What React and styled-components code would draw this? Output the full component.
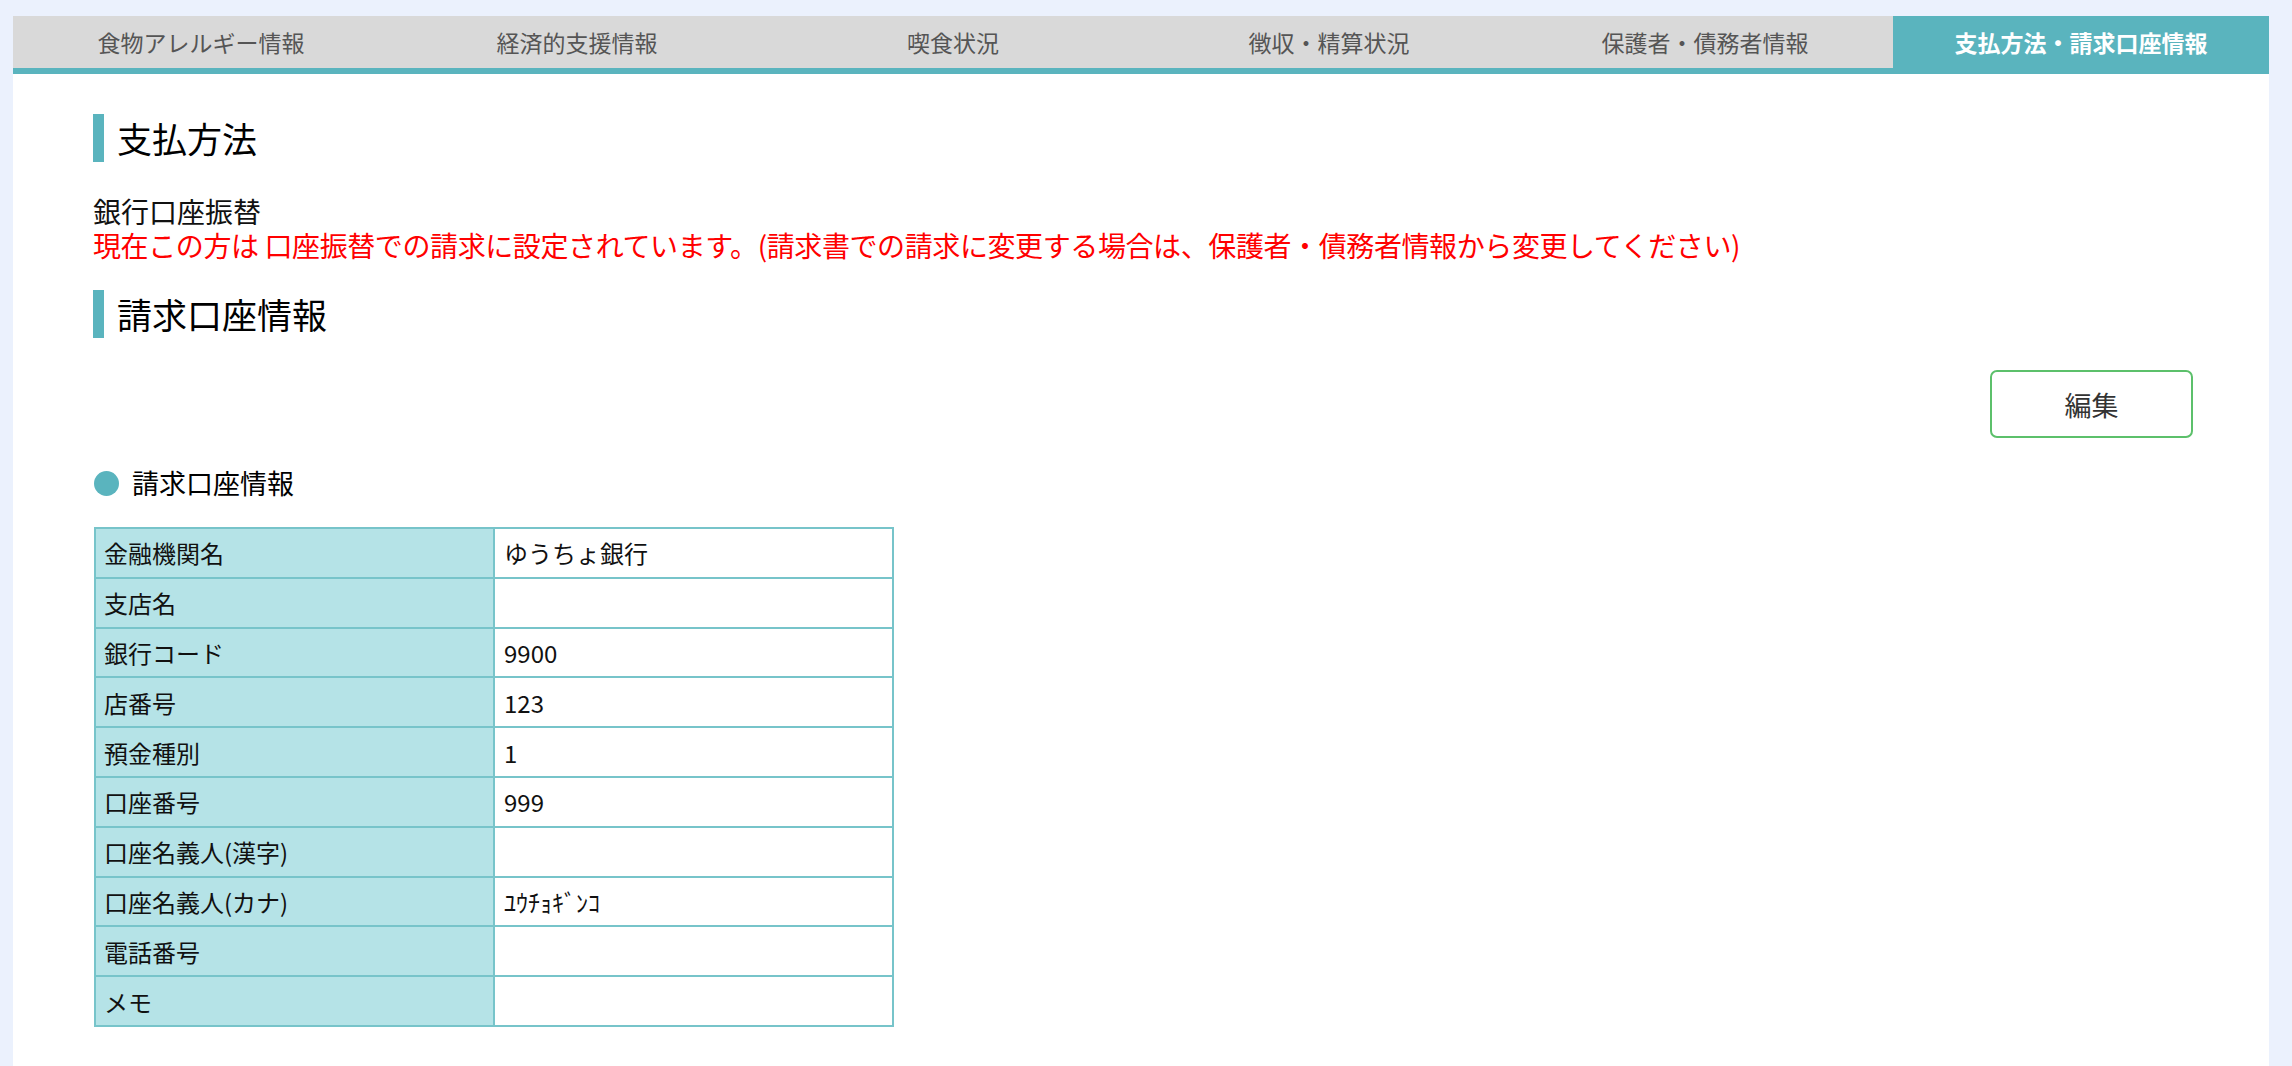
import React from "react";
import styled, { createGlobalStyle } from "styled-components";

const teal = "#5ab4be";

const GlobalStyle = createGlobalStyle`
  html, body {
    margin: 0;
    padding: 0;
    background: #ebf1fd;
  }
  body {
    font-family: "Noto Sans CJK JP", "Noto Sans", sans-serif;
    color: #111;
  }
`;

const Page = styled.div`
  padding: 16px 23px 0 13px;
  min-height: 1066px;
  box-sizing: border-box;
`;

const Panel = styled.div`
  background: #fff;
  min-height: 1050px;
`;

const TabBar = styled.nav`
  display: grid;
  grid-template-columns: repeat(6, 1fr);
  border-bottom: 6px solid ${teal};
`;

const Tab = styled.div`
  height: 52px;
  display: flex;
  align-items: center;
  justify-content: center;
  font-size: 23px;
  background: ${(p) => (p.$active ? teal : "#d9d9d9")};
  color: ${(p) => (p.$active ? "#fff" : "#555")};
  font-weight: ${(p) => (p.$active ? 700 : 400)};
`;

const Content = styled.div`
  padding: 40px 76px 40px 80px;
`;

const SectionTitle = styled.h2`
  margin: 0;
  height: 48px;
  line-height: 48px;
  border-left: 11px solid ${teal};
  padding-left: 13px;
  font-size: 35px;
  font-weight: 400;
  color: #000;
`;

const MethodBlock = styled.div`
  margin: 32px 0 28px;
  font-size: 28px;
  line-height: 34px;
`;

const Notice = styled.div`
  color: #ff0000;
  letter-spacing: -0.4px;
`;

const Toolbar = styled.div`
  display: flex;
  justify-content: flex-end;
  margin: 32px 0 28px;
`;

const EditButton = styled.button`
  width: 203px;
  height: 68px;
  background: #fff;
  border: 2px solid #5cc06b;
  border-radius: 7px;
  font-family: inherit;
  font-size: 27px;
  color: #333;
  cursor: pointer;
`;

const SubTitle = styled.h3`
  margin: 0 0 27px;
  display: flex;
  align-items: center;
  gap: 13px;
  font-size: 27px;
  line-height: 34px;
  font-weight: 400;
  color: #000;

  &::before {
    content: "";
    width: 25px;
    height: 25px;
    border-radius: 50%;
    background: ${teal};
    margin-left: 1px;
  }
`;

const InfoGrid = styled.div`
  display: grid;
  grid-template-columns: 397px 397px;
  grid-auto-rows: 47.8px;
  gap: 2px;
  padding: 2px;
  width: max-content;
  background: #77c4ca;
  margin-left: 1px;
`;

const Cell = styled.div`
  display: flex;
  align-items: center;
  padding-left: ${(p) => (p.$label ? "8px" : "9px")};
  font-size: 24px;
  color: #111;
  background: ${(p) => (p.$label ? "#b5e3e7" : "#fff")};
`;

const tabs = [
  "食物アレルギー情報",
  "経済的支援情報",
  "喫食状況",
  "徴収・精算状況",
  "保護者・債務者情報",
  "支払方法・請求口座情報",
];

const rows = [
  ["金融機関名", "ゆうちょ銀行"],
  ["支店名", ""],
  ["銀行コード", "9900"],
  ["店番号", "123"],
  ["預金種別", "1"],
  ["口座番号", "999"],
  ["口座名義人(漢字)", ""],
  ["口座名義人(カナ)", "ﾕｳﾁｮｷﾞﾝｺ"],
  ["電話番号", ""],
  ["メモ", ""],
];

export default function App() {
  return (
    <Page>
      <GlobalStyle />
      <Panel>
        <TabBar>
          {tabs.map((t, i) => (
            <Tab key={t} $active={i === tabs.length - 1}>
              {t}
            </Tab>
          ))}
        </TabBar>
        <Content>
          <SectionTitle>支払方法</SectionTitle>
          <MethodBlock>
            <div>銀行口座振替</div>
            <Notice>
              現在この方は 口座振替での請求に設定されています。(請求書での請求に変更する場合は、保護者・債務者情報から変更してください)
            </Notice>
          </MethodBlock>
          <SectionTitle>請求口座情報</SectionTitle>
          <Toolbar>
            <EditButton>編集</EditButton>
          </Toolbar>
          <SubTitle>請求口座情報</SubTitle>
          <InfoGrid>
            {rows.map(([label, value]) => (
              <React.Fragment key={label}>
                <Cell $label>{label}</Cell>
                <Cell>{value}</Cell>
              </React.Fragment>
            ))}
          </InfoGrid>
        </Content>
      </Panel>
    </Page>
  );
}
